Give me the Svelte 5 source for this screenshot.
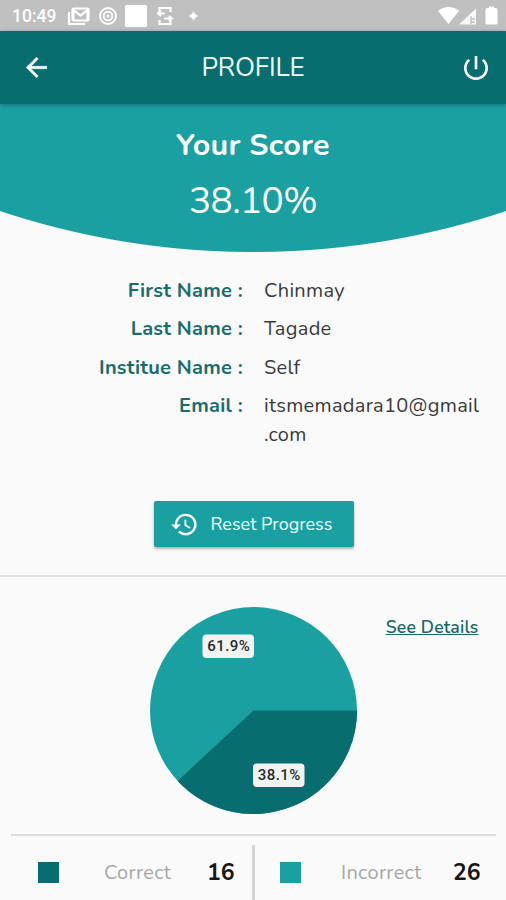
<script>
  let profile = [
    { label: 'First Name', value: 'Chinmay' },
    { label: 'Last Name', value: 'Tagade' },
    { label: 'Institue Name', value: 'Self' },
    { label: 'Email', value: 'itsmemadara10@gmail.com' }
  ];

  let correct = 16;
  let incorrect = 26;

  // Pie geometry
  const R = 103.5;
  $: share = correct / (correct + incorrect);
  $: angle = share * Math.PI * 2;
  $: endX = R + R * Math.cos(angle);
  $: endY = R + R * Math.sin(angle);
  $: slice = `M${R} ${R} L${R * 2} ${R} A${R} ${R} 0 ${share > 0.5 ? 1 : 0} 1 ${endX} ${endY} Z`;
</script>

<div class="screen">
  <div class="status-bar">
    <span class="clock">10:49</span>
    <svg class="notifications" width="136" height="24" viewBox="0 0 136 24" fill="none" stroke="#fff" stroke-width="2.2">
      <path d="M2 8v12h16" />
      <rect x="5.5" y="4.5" width="16" height="12" rx="1" />
      <path d="M6.5 15V6l7 5.5 7-5.5v9" />
      <circle cx="41" cy="12" r="8" stroke-width="1.8" />
      <circle cx="41" cy="12" r="4.3" stroke-width="1.8" />
      <circle cx="41" cy="12" r="1.5" fill="#fff" stroke="none" />
      <rect x="58" y="1" width="22" height="22" rx="1.5" fill="#fff" stroke="none" />
      <path d="M92.500 8.500V4h11v4M92.500 16v4h11v-3.500" />
      <path d="M90 9.500h8M94 7l-3 2.500 3 2.500M97 14.500h8M102 12l3 2.500-3 2.500" stroke-width="2" />
      <circle cx="126.500" cy="12" r="2.8" fill="#fff" stroke="none" />
      <path d="M122 12h9M126.500 7.500v9" stroke-width="1.8" opacity=".7" />
    </svg>
    <svg class="signals" width="62" height="22" viewBox="0 0 62 22" fill="#fff">
      <path d="M1 6C7 .8 16 .8 22 6L11.500 19z" />
      <path d="M22 19.500 39 3.500v16z" opacity=".9" />
      <path d="M34 11v8M34 14h4M34 17h4" stroke="#c1c1c1" stroke-width="1.3" />
      <path d="M50 3h2V1.500h5V3h2q1.500 0 1.500 1.500v13.500q0 1.500-1.500 1.500h-9q-1.500 0-1.500-1.500V4.500Q48.500 3 50 3z" />
    </svg>
  </div>

  <header class="app-bar">
    <button class="icon-btn" aria-label="Back">
      <svg width="31" height="31" viewBox="0 0 24 24" fill="#fff">
        <path d="M20 11H7.830l5.590-5.590L12 4l-8 8 8 8 1.410-1.410L7.830 13H20v-2z" stroke="#fff" stroke-width=".3" />
      </svg>
    </button>
    <h1>PROFILE</h1>
    <button class="icon-btn" aria-label="Log out">
      <svg width="32" height="32" viewBox="0 0 24 24" fill="#fff">
        <path d="M13 3h-2v10h2V3zm4.830 2.170-1.420 1.420C17.990 7.860 19 9.810 19 12c0 3.870-3.130 7-7 7s-7-3.130-7-7c0-2.190 1.010-4.140 2.580-5.420L6.170 5.170C4.230 6.820 3 9.260 3 12c0 4.970 4.030 9 9 9s9-4.030 9-9c0-2.740-1.230-5.180-3.170-6.830z" />
      </svg>
    </button>
  </header>

  <section class="score">
    <div class="score-title">Your Score</div>
    <div class="score-value">{(share * 100).toFixed(2)}%</div>
  </section>

  <section class="details">
    {#each profile as item}
      <div class="label">{item.label} :</div>
      <div class="value">{item.value}</div>
    {/each}
  </section>

  <div class="actions">
    <button class="reset">
      <svg width="29" height="29" viewBox="0 0 24 24" fill="#fff">
        <path d="M13 3c-4.970 0-9 4.030-9 9H1l3.890 3.890.07.14L9 12H6c0-3.870 3.130-7 7-7s7 3.130 7 7-3.130 7-7 7c-1.930 0-3.680-.79-4.940-2.060l-1.420 1.420C8.270 19.990 10.510 21 13 21c4.970 0 9-4.030 9-9s-4.030-9-9-9zm-1 5v5l4.280 2.540.72-1.210-3.500-2.080V8H12z" />
      </svg>
      <span>Reset Progress</span>
    </button>
  </div>

  <section class="chart">
    <svg class="pie" width="207" height="207" viewBox="0 0 207 207">
      <circle cx={R} cy={R} r={R} fill="#1ba0a1" />
      <path d={slice} fill="#076d6e" />
      <rect x="52.500" y="27.500" width="51.500" height="23.500" rx="4" fill="#f1f3f3" />
      <text x="78.700" y="44">{((1 - share) * 100).toFixed(1)}%</text>
      <rect x="103" y="156.500" width="51.500" height="23.500" rx="4" fill="#f1f3f3" />
      <text x="129.200" y="173">{(share * 100).toFixed(1)}%</text>
    </svg>
    <div class="see-details">See Details</div>
  </section>

  <footer class="legend">
    <div class="legend-item">
      <i class="swatch dark"></i>
      <span class="name">Correct</span>
      <b>{correct}</b>
    </div>
    <div class="separator"></div>
    <div class="legend-item">
      <i class="swatch"></i>
      <span class="name incorrect">Incorrect</span>
      <b>{incorrect}</b>
    </div>
  </footer>
</div>

<style>
  :global(body) {
    margin: 0;
    background: #fafafa;
  }

  .screen {
    width: 506px;
    height: 900px;
    overflow: hidden;
    display: flex;
    flex-direction: column;
    background: #fafafa;
    font-family: 'Nunito', 'Open Sans', 'Noto Sans', sans-serif;
    color: #3a3a3a;
  }

  button {
    border: none;
    padding: 0;
    background: none;
    font-family: inherit;
    display: flex;
    align-items: center;
  }

  span {
    white-space: nowrap;
  }

  /* Status bar */
  .status-bar {
    height: 31px;
    flex: none;
    box-sizing: border-box;
    display: flex;
    align-items: center;
    padding: 1px 7px 0 12px;
    background: #c0c0c0;
    color: #fff;
  }

  .clock {
    width: 55px;
    font: 500 17.5px Roboto, sans-serif;
  }

  .signals {
    margin-left: auto;
  }

  /* App bar */
  .app-bar {
    height: 73px;
    flex: none;
    box-sizing: border-box;
    display: grid;
    grid-template-columns: 31px 1fr 32px;
    align-items: center;
    padding: 0 14px 0 21px;
    background: #076d6e;
    box-shadow: 0 1px 4px rgba(0, 0, 0, 0.3);
    z-index: 1;
  }

  .app-bar h1 {
    margin: 0 6px 0 0;
    text-align: center;
    font-size: 26px;
    font-weight: 400;
    line-height: 36px;
    letter-spacing: -0.1px;
    color: #f4ffff;
  }

  /* Score */
  .score {
    height: 148px;
    flex: none;
    display: flex;
    flex-direction: column;
    align-items: center;
    color: #fff;
    background: radial-gradient(circle 802px at 253px -653.5px, #1ba0a1 801px, #fafafa 802px);
    background-size: 100% 149px;
  }

  .score-title {
    margin-top: 21px;
    font-size: 30.5px;
    font-weight: 700;
    line-height: 40px;
    letter-spacing: 0.3px;
  }

  .score-value {
    margin-top: 11px;
    font-size: 37px;
    font-weight: 400;
    line-height: 50px;
    letter-spacing: -0.6px;
  }

  /* Details */
  .details {
    height: 231px;
    flex: none;
    box-sizing: border-box;
    padding-top: 23.6px;
    display: grid;
    grid-template-columns: 243px 216px;
    column-gap: 21px;
    align-content: start;
    row-gap: 9.6px;
    font-size: 20px;
    line-height: 29px;
  }

  .label {
    text-align: right;
    color: #1a6d6d;
    font-weight: 700;
    letter-spacing: 0.25px;
  }

  .value {
    overflow-wrap: anywhere;
    letter-spacing: 0.3px;
  }

  /* Reset button */
  .actions {
    height: 94px;
    flex: none;
    box-sizing: border-box;
    display: flex;
    justify-content: center;
    padding: 18px 0 0 1px;
    border-bottom: 2px solid #e1e1e1;
  }

  .reset {
    width: 200px;
    height: 46px;
    padding-left: 16px;
    gap: 12px;
    border-radius: 2px;
    background: #1ba0a1;
    box-shadow: 0 2px 3px rgba(0, 0, 0, 0.3);
    color: #efffff;
    font-size: 18px;
  }

  /* Chart */
  .chart {
    height: 227px;
    flex: none;
    display: grid;
    grid-template-columns: 150px 207px 121.5px;
    padding-top: 30px;
  }

  .pie {
    grid-column: 2;
  }

  .pie text {
    font: 500 15px Roboto, sans-serif;
    letter-spacing: 0.4px;
    fill: #252b2c;
    text-anchor: middle;
  }

  .see-details {
    margin-top: 7px;
    text-align: right;
    font-size: 17.6px;
    line-height: 26px;
    font-weight: 600;
    letter-spacing: 0.15px;
    color: #176768;
    text-decoration: underline;
    text-decoration-thickness: 1px;
  }

  /* Legend */
  .legend {
    height: 66px;
    flex: none;
    box-sizing: border-box;
    margin: 0 10px 0 11px;
    border-top: 2px solid #dcdcdc;
    display: grid;
    grid-template-columns: 241px 3px 241px;
  }

  .separator {
    margin-top: 9px;
    background: #d4d4d4;
  }

  .legend-item {
    display: grid;
    grid-template-columns: 21px 1fr 28px;
    align-items: center;
    padding: 9px 17px 0 27px;
  }

  .legend-item:last-child {
    padding: 9px 15px 0 25px;
  }

  .swatch {
    width: 21px;
    height: 21px;
    background: #1ba0a1;
  }

  .swatch.dark {
    background: #076d6e;
  }

  .name {
    margin-left: 45px;
    font-size: 20px;
    color: #a7a7a7;
    font-weight: 400;
    letter-spacing: 0.3px;
  }

  .name.incorrect {
    margin-left: 40px;
  }

  .legend b {
    font-size: 23px;
    font-weight: 700;
    color: #171717;
  }
</style>
